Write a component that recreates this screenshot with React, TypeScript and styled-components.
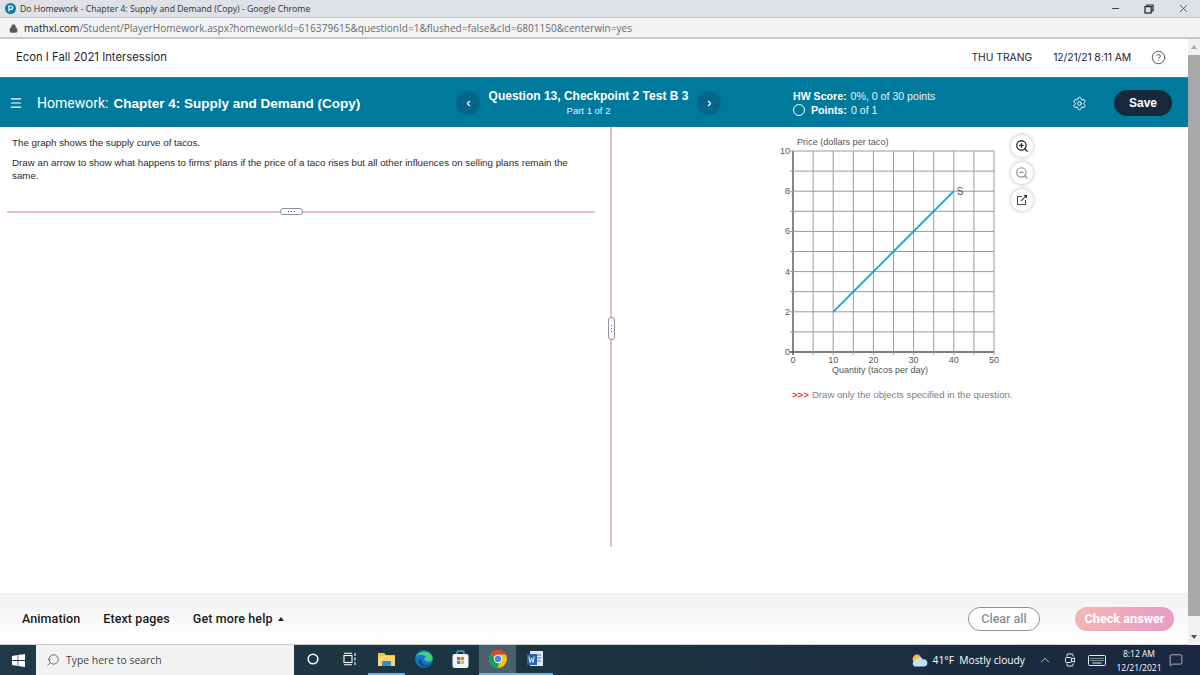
import React from "react";
import styled, { createGlobalStyle } from "styled-components";
import { Menu, Search, Settings, ZoomIn, ZoomOut, Minus, X, ChevronLeft, ChevronRight, ChevronUp, Lock, MessageSquare, HelpCircle } from "lucide-react";

const GlobalStyle = createGlobalStyle`
    html, body {
        margin: 0;
        padding: 0;
        background: #fff;
    }
    * {
        box-sizing: border-box;
    }
`;

const Screen = styled.div`
    width: 1200px;
    height: 675px;
    display: flex;
    flex-direction: column;
    overflow: hidden;
    font-family: "Liberation Sans", Arial, sans-serif;
    color: #222;
`;

const TitleBar = styled.div`
    height: 18px;
    display: flex;
    align-items: center;
    padding-left: 5px;
    background: #dee1e6;
    border-bottom: 1px solid #c4c7cc;
    font-family: "Open Sans", sans-serif;
    font-size: 8.7px;
    color: #303030;
`;

const TitleText = styled.span`
    margin-left: 4px;
    flex: 1;
`;

const WindowButton = styled.span`
    width: 34px;
    display: flex;
    justify-content: center;
    color: #333;
`;

const AddressBar = styled.div`
    height: 21px;
    display: flex;
    align-items: center;
    padding: 1px 0 0 9px;
    background: #f1f3f4;
    border-bottom: 2px solid #c9c9c9;
    font-family: "Open Sans", sans-serif;
    font-size: 10.08px;
    color: #6a6d70;
`;

const Host = styled.span`
    margin-left: 6px;
    color: #222;
`;

const Body = styled.div`
    flex: 1;
    min-height: 0;
    display: flex;
`;

const Page = styled.div`
    flex: 1;
    min-width: 0;
    display: flex;
    flex-direction: column;
`;

const ScrollBar = styled.div`
    width: 12px;
    display: flex;
    flex-direction: column;
    background: #f1f1f1;
`;

const ScrollArrow = styled.div<{ $down?: boolean }>`
    height: 16px;
    display: flex;
    align-items: center;
    justify-content: center;
    &::after {
        content: "";
        border-left: 3px solid transparent;
        border-right: 3px solid transparent;
        ${(p) => (p.$down ? "border-top: 4px solid #505050;" : "border-bottom: 4px solid #a8a8a8;")}
    }
`;

const ScrollThumb = styled.div`
    flex: 1;
    background: #a8a8a8;
`;

const ScrollRest = styled.div`
    height: 13px;
`;

const TopRow = styled.div`
    height: 38px;
    display: flex;
    align-items: center;
    padding: 0 22px 2px 16px;
    font-family: "Inter", sans-serif;
    font-size: 11.3px;
    color: #1c2733;
    background: #fff;
`;

const CourseName = styled.span`
    flex: 1;
`;

const UserName = styled.span`
    margin-right: 21px;
    font-size: 10.3px;
`;

const StampText = styled.span`
    margin-right: 20px;
    font-size: 10.4px;
    letter-spacing: -0.1px;
`;

const TealBar = styled.div`
    height: 50px;
    display: flex;
    align-items: center;
    background: #007a9c;
    border-top: 1px solid #0a93b3;
    color: #fff;
    padding: 1px 16px 0 9px;
`;

const HomeworkTitle = styled.div`
    width: 419px;
    margin-left: 14px;
    font-family: "Roboto", sans-serif;
    font-size: 14px;
    font-weight: 400;
    white-space: nowrap;
`;

const HomeworkName = styled.b`
    margin-left: 5px;
    font-family: "Liberation Sans", sans-serif;
    font-size: 13.5px;
    font-weight: 700;
`;

const NavCircle = styled.button`
    width: 24px;
    height: 24px;
    padding: 0;
    border: 0;
    border-radius: 50%;
    display: flex;
    align-items: center;
    justify-content: center;
    background: #06658a;
    color: #fff;
`;

const QuestionBlock = styled.div`
    width: 217px;
    display: flex;
    flex-direction: column;
    align-items: center;
    font-size: 12px;
    font-weight: 700;
    white-space: nowrap;
    position: relative;
    top: -1px;
`;

const QuestionPart = styled.span`
    margin-top: 2px;
    font-size: 9.5px;
    font-weight: 400;
    color: #e5f1f5;
`;

const ScoreBlock = styled.div`
    width: 279px;
    margin-left: 72px;
    display: flex;
    flex-direction: column;
    gap: 2px;
    font-size: 10.6px;
    color: #e8f3f6;
`;

const ScoreRow = styled.div`
    display: flex;
    align-items: center;
`;

const ScoreRing = styled.span`
    width: 12px;
    height: 12px;
    margin-right: 6px;
    border: 1.5px solid #fff;
    border-radius: 50%;
`;

const ScoreLabel = styled.b`
    margin-right: 4px;
    color: #fff;
`;

const SaveButton = styled.button`
    width: 58px;
    height: 26px;
    margin-left: 27px;
    border: 0;
    border-radius: 13px;
    background: #16293b;
    color: #fff;
    font-family: "Liberation Sans", sans-serif;
    font-size: 12px;
    font-weight: 700;
`;

const Main = styled.div`
    flex: 1;
    min-height: 0;
    display: flex;
    align-items: flex-start;
    background: #fff;
`;

const QuestionPane = styled.div`
    width: 612px;
    height: 420px;
    position: relative;
    border-right: 2px solid #eebccb;
    padding: 9px 0 0 12px;
    font-size: 9.75px;
    color: #2b2b2b;
`;

const Paragraph = styled.p`
    width: 562px;
    margin: 0 0 7px;
    line-height: 13px;
`;

const Separator = styled.div`
    width: 588px;
    height: 2px;
    margin: 29px 0 0 -5px;
    position: relative;
    background: #eebccb;
`;

const HSeparatorHandle = styled.span`
    position: absolute;
    left: 273px;
    top: -3px;
    width: 23px;
    height: 7px;
    border: 1px solid #8c93a0;
    border-radius: 3px;
    background: #fff;
    display: flex;
    align-items: center;
    justify-content: center;
    gap: 1.5px;
`;

const VSeparatorHandle = styled.span`
    position: absolute;
    right: -5px;
    top: 190px;
    width: 7px;
    height: 23px;
    border: 1px solid #8c93a0;
    border-radius: 3px;
    background: #fff;
    display: flex;
    flex-direction: column;
    align-items: center;
    justify-content: center;
    gap: 1.5px;
`;

const HandleDot = styled.i`
    width: 1.5px;
    height: 1.5px;
    background: #555;
`;

const GraphPane = styled.div`
    padding: 5px 0 0 158px;
`;

const GraphRow = styled.div`
    display: flex;
    align-items: flex-start;
`;

const GraphSvg = styled.svg`
    display: block;
    font-family: "Liberation Sans", sans-serif;
    fill: #555;
`;

const ToolColumn = styled.div`
    margin: 3px 0 0 1px;
    display: flex;
    flex-direction: column;
    gap: 5px;
`;

const ToolButton = styled.button<{ $muted?: boolean }>`
    width: 22px;
    height: 22px;
    padding: 0;
    border: 0;
    border-radius: 50%;
    display: flex;
    align-items: center;
    justify-content: center;
    background: #fff;
    box-shadow: 0 0 4px rgba(0, 0, 0, 0.3);
    color: ${(p) => (p.$muted ? "#8b929a" : "#1c2733")};
`;

const GraphNote = styled.div`
    margin: 9px 0 0 22px;
    font-size: 9.65px;
    color: #7b7f85;
`;

const NoteMark = styled.b`
    margin-right: 3px;
    color: #ef3a3a;
`;

const Footer = styled.div`
    height: 52px;
    display: flex;
    align-items: center;
    padding: 0 14px 0 22px;
    background: linear-gradient(#f2f2f2, #ffffff);
    border-bottom: 1px solid #d0d0d0;
    font-family: "Roboto", sans-serif;
    font-size: 12.5px;
    font-weight: 500;
    color: #1b1b1b;
`;

const FooterLink = styled.span`
    margin-right: 23px;
    letter-spacing: 0.1px;
`;

const Caret = styled.i`
    display: inline-block;
    margin-left: 5px;
    vertical-align: 2px;
    border-left: 3px solid transparent;
    border-right: 3px solid transparent;
    border-bottom: 4px solid #222;
`;

const FooterSpace = styled.div`
    flex: 1;
`;

const ClearButton = styled.button`
    width: 72px;
    height: 24px;
    border: 1.5px solid #8a929f;
    border-radius: 12px;
    background: #fff;
    color: #87909c;
    font-family: "Roboto", sans-serif;
    font-size: 12.5px;
    font-weight: 500;
`;

const CheckButton = styled.button`
    width: 99px;
    height: 24px;
    margin-left: 35px;
    border: 0;
    border-radius: 12px;
    background: linear-gradient(90deg, #f5b5b2, #e79ccb);
    color: #fff;
    font-family: "Roboto", sans-serif;
    font-size: 12.7px;
    font-weight: 700;
    white-space: nowrap;
    padding: 0;
`;

const Taskbar = styled.div`
    height: 30px;
    display: flex;
    align-items: center;
    background: linear-gradient(90deg, #1f3a46, #1c3340 50%, #1a2740);
    color: #fff;
    font-family: "Open Sans", sans-serif;
    font-size: 11px;
`;

const StartSlot = styled.div`
    width: 36px;
    display: flex;
    justify-content: center;
`;

const SearchBox = styled.div`
    width: 258px;
    height: 30px;
    padding-left: 10px;
    display: flex;
    align-items: center;
    gap: 6px;
    background: #f2f2f2;
    color: #444;
    font-size: 10.4px;
`;

const FlippedSearch = styled(Search)`
    transform: scaleX(-1);
`;

const TaskIcon = styled.div<{ $active?: boolean; $open?: boolean }>`
    width: 37px;
    height: 30px;
    display: flex;
    align-items: center;
    justify-content: center;
    background: ${(p) => (p.$active ? "#48606b" : "transparent")};
    border-bottom: 2px solid ${(p) => (p.$open ? "#6cb4ea" : "transparent")};
`;

const TaskSpace = styled.div`
    flex: 1;
`;

const WeatherText = styled.span`
    margin: 0 13px 0 5px;
    font-size: 10.25px;
    white-space: nowrap;
`;

const TrayIcon = styled.span`
    margin-right: 13px;
    display: flex;
    align-items: center;
`;

const NotifyIcon = styled(TrayIcon)`
    margin-right: 17px;
`;

const Clock = styled.div`
    width: 40px;
    margin-right: 10px;
    display: flex;
    flex-direction: column;
    align-items: center;
    gap: 3px;
    font-size: 8.5px;
    line-height: 11px;
    white-space: nowrap;
`;

const xTicks = [0, 1, 2, 3, 4, 5, 6, 7, 8, 9, 10];
const X0 = 23;
const Y0 = 220;
const STEP = 20.1;

function PriceGraph() {
    return (
        <GraphSvg width={240} height={248} viewBox="0 0 240 248">
            <text x={27} y={13} fontSize={9.1}>Price (dollars per taco)</text>
            {xTicks.map((i) => (
                <g key={i}>
                    <line x1={X0 + i * STEP} y1={Y0 - 10 * STEP} x2={X0 + i * STEP} y2={Y0 + 3} stroke={i === 0 ? "#555" : "#9a9a9a"} strokeWidth={i === 0 ? 1.4 : 1} />
                    <line x1={X0 - 3} y1={Y0 - i * STEP} x2={X0 + 10 * STEP} y2={Y0 - i * STEP} stroke={i === 0 ? "#555" : "#9a9a9a"} strokeWidth={i === 0 ? 1.4 : 1} />
                </g>
            ))}
            {[0, 2, 4, 6, 8, 10].map((n) => (
                <text key={n} x={X0 - 3} y={Y0 - n * STEP + 3} fontSize={9} textAnchor="end">{n}</text>
            ))}
            {[0, 10, 20, 30, 40, 50].map((n) => (
                <text key={n} x={X0 + (n / 5) * STEP} y={Y0 + 11} fontSize={9} textAnchor="middle">{n}</text>
            ))}
            <line x1={X0 + 2 * STEP} y1={Y0 - 2 * STEP} x2={X0 + 8 * STEP} y2={Y0 - 8 * STEP} stroke="#04a6e8" strokeWidth={1.8} />
            <text x={X0 + 8 * STEP + 3} y={Y0 - 8 * STEP + 4} fontSize={10}>S</text>
            <text x={X0 + 87} y={Y0 + 20.5} fontSize={9} textAnchor="middle">Quantity (tacos per day)</text>
        </GraphSvg>
    );
}

function PearsonLogo() {
    return (
        <svg width={11} height={11} viewBox="0 0 11 11">
            <circle cx={5.5} cy={5.5} r={5.5} fill="#0d7ea6" />
            <path d="M4 8.5V3h2a1.6 1.6 0 010 3.4H4" fill="none" stroke="#fff" strokeWidth={1.2} />
        </svg>
    );
}

function RestoreIcon() {
    return (
        <svg width={10} height={10} viewBox="0 0 10 10" fill="none" stroke="#222" strokeWidth={1.2}>
            <rect x={1} y={2.6} width={6.2} height={6.4} />
            <path d="M3 2.5V1h6v6H7.4" />
        </svg>
    );
}

function ExternalIcon() {
    return (
        <svg width={12} height={12} viewBox="0 0 12 12" fill="none" stroke="#4a5058" strokeWidth={1.1}>
            <path d="M6 2.5H1.5v8h8V6" />
            <path d="M5 7l5-5" />
            <path d="M7.5 1h3.5v3.5z" fill="#1c2733" stroke="none" />
        </svg>
    );
}

function WindowsLogo() {
    return (
        <svg width={13} height={13} viewBox="0 0 13 13" fill="#fff">
            <path d="M0 1.9l5.6-.8v5H0zM6.3 1l6.7-1v6.1H6.3zM0 6.9h5.6v5L0 11.1zM6.3 6.9H13V13l-6.7-1z" />
        </svg>
    );
}

function CortanaIcon() {
    return (
        <svg width={12} height={12} viewBox="0 0 12 12">
            <circle cx={6} cy={6} r={4.8} fill="none" stroke="#fff" strokeWidth={1.6} />
        </svg>
    );
}

function TaskViewIcon() {
    return (
        <svg width={13} height={14} viewBox="0 0 13 14" fill="none" stroke="#fff" strokeWidth={1.1}>
            <rect x={1} y={3.5} width={8} height={7} />
            <path d="M1 1.2h8M1 12.8h8M12 1v3M12 5.5v3M12 10v3" />
        </svg>
    );
}

function FolderIcon() {
    return (
        <svg width={17} height={15} viewBox="0 0 17 15">
            <path d="M0 1h6l2 2h9v11H0z" fill="#f2c43d" />
            <rect x={0} y={4} width={17} height={10} fill="#fbd667" />
            <rect x={4} y={9} width={9} height={5} fill="#2f8fd6" />
        </svg>
    );
}

function EdgeIcon() {
    return (
        <svg width={18} height={18} viewBox="0 0 18 18">
            <circle cx={9} cy={9} r={9} fill="#1174c4" />
            <path d="M1 7C3 1 15-1 17.6 8c.4 3-3 4-6 3.4C9 11 8.4 8 11 7 8 4 3 4 1 7z" fill="#45cf7e" />
            <path d="M6 9c0 4 4 7 9 5.4-3 3.4-9 3-11-1-1-2 0-4 2-4.4z" fill="#0a4f96" />
        </svg>
    );
}

function StoreIcon() {
    return (
        <svg width={17} height={18} viewBox="0 0 17 18">
            <path d="M5 4V2.4A1.5 1.5 0 016.5 1h4A1.5 1.5 0 0112 2.4V4" fill="none" stroke="#3aa7e0" strokeWidth={1.4} />
            <rect x={0.5} y={4} width={16} height={14} rx={2} fill="#f4f4f4" />
            <rect x={5} y={7} width={3.2} height={3.2} fill="#f25022" />
            <rect x={8.8} y={7} width={3.2} height={3.2} fill="#7fba00" />
            <rect x={5} y={10.8} width={3.2} height={3.2} fill="#00a4ef" />
            <rect x={8.8} y={10.8} width={3.2} height={3.2} fill="#ffb900" />
        </svg>
    );
}

function ChromeIcon() {
    return (
        <svg width={18} height={18} viewBox="0 0 18 18">
            <circle cx={9} cy={9} r={9} fill="#f4c20d" />
            <path d="M9 0a9 9 0 017.8 4.5H9A4.5 4.5 0 004.8 7.3L2.2 3.2A9 9 0 019 0z" fill="#db4437" />
            <path d="M2.2 3.2l4 7a4.5 4.5 0 004.4 2.6L8 18A9 9 0 012.2 3.2z" fill="#0f9d58" />
            <circle cx={9} cy={9} r={4.2} fill="#fff" />
            <circle cx={9} cy={9} r={3.2} fill="#4285f4" />
        </svg>
    );
}

function WordIcon() {
    return (
        <svg width={18} height={18} viewBox="0 0 18 18">
            <rect x={4} y={1} width={13} height={15} fill="#dfe7f3" />
            <path d="M8 5h7M8 8h7M8 11h7" stroke="#4a75b8" />
            <rect x={1} y={4} width={10} height={11} fill="#2b5fa8" />
            <path d="M2.8 6.5l1.3 6 1.4-4.5L7 12.5l1.2-6" fill="none" stroke="#fff" strokeWidth={0.9} />
        </svg>
    );
}

function WeatherIcon() {
    return (
        <svg width={16} height={13} viewBox="0 0 16 13">
            <circle cx={5} cy={5} r={4.4} fill="#f5c04a" />
            <path d="M4 12.5a3 3 0 01-.4-6A4 4 0 0111 5.4a3.6 3.6 0 011.4 7.1z" fill="#bfe0f7" />
        </svg>
    );
}

function MeetIcon() {
    return (
        <svg width={10} height={14} viewBox="0 0 10 14" fill="none" stroke="#fff" strokeWidth={0.9}>
            <path d="M2 3.5V2a1 1 0 011-1h4a1 1 0 011 1v1.5M2 10.5V12a1 1 0 001 1h4a1 1 0 001-1v-1.5" />
            <rect x={0.5} y={4.5} width={6} height={5} rx={1} />
            <path d="M6.5 6l3-1.2v4.4l-3-1.2" />
        </svg>
    );
}

function KeyboardIcon() {
    return (
        <svg width={18} height={11} viewBox="0 0 18 11" fill="none" stroke="#fff" strokeWidth={0.9}>
            <rect x={0.5} y={0.5} width={17} height={10} rx={1} />
            <path d="M2.5 3.5h13M2.5 5.5h13" strokeDasharray="1 1" />
            <path d="M4.5 8h9" />
        </svg>
    );
}

export default function App() {
    return (
        <>
            <GlobalStyle />
            <Screen>
                <TitleBar>
                    <PearsonLogo />
                    <TitleText>Do Homework - Chapter 4: Supply and Demand (Copy) - Google Chrome</TitleText>
                    <WindowButton><Minus size={11} /></WindowButton>
                    <WindowButton><RestoreIcon /></WindowButton>
                    <WindowButton><X size={13} strokeWidth={1.3} /></WindowButton>
                </TitleBar>
                <AddressBar>
                    <Lock size={9} fill="#555" stroke="#555" />
                    <Host>mathxl.com</Host>
                    /Student/PlayerHomework.aspx?homeworkId=616379615&questionId=1&flushed=false&cId=6801150&centerwin=yes
                </AddressBar>
                <Body>
                    <Page>
                        <TopRow>
                            <CourseName>Econ I Fall 2021 Intersession</CourseName>
                            <UserName>THU TRANG</UserName>
                            <StampText>12/21/21 8:11 AM</StampText>
                            <HelpCircle size={15} strokeWidth={1.2} />
                        </TopRow>
                        <TealBar>
                            <Menu size={14} strokeWidth={2} />
                            <HomeworkTitle>Homework:<HomeworkName>Chapter 4: Supply and Demand (Copy)</HomeworkName></HomeworkTitle>
                            <NavCircle><ChevronLeft size={9} strokeWidth={3} /></NavCircle>
                            <QuestionBlock>
                                Question 13, Checkpoint 2 Test B 3
                                <QuestionPart>Part 1 of 2</QuestionPart>
                            </QuestionBlock>
                            <NavCircle><ChevronRight size={9} strokeWidth={3} /></NavCircle>
                            <ScoreBlock>
                                <ScoreRow><ScoreLabel>HW Score:</ScoreLabel>0%, 0 of 30 points</ScoreRow>
                                <ScoreRow><ScoreRing /><ScoreLabel>Points:</ScoreLabel>0 of 1</ScoreRow>
                            </ScoreBlock>
                            <Settings size={15} strokeWidth={1.5} />
                            <SaveButton>Save</SaveButton>
                        </TealBar>
                        <Main>
                            <QuestionPane>
                                <Paragraph>The graph shows the supply curve of tacos.</Paragraph>
                                <Paragraph>Draw an arrow to show what happens to firms' plans if the price of a taco rises but all other influences on selling plans remain the same.</Paragraph>
                                <Separator>
                                    <HSeparatorHandle><HandleDot /><HandleDot /><HandleDot /></HSeparatorHandle>
                                </Separator>
                                <VSeparatorHandle><HandleDot /><HandleDot /><HandleDot /></VSeparatorHandle>
                            </QuestionPane>
                            <GraphPane>
                                <GraphRow>
                                    <PriceGraph />
                                    <ToolColumn>
                                        <ToolButton><ZoomIn size={14} strokeWidth={2.2} /></ToolButton>
                                        <ToolButton $muted><ZoomOut size={14} /></ToolButton>
                                        <ToolButton><ExternalIcon /></ToolButton>
                                    </ToolColumn>
                                </GraphRow>
                                <GraphNote><NoteMark>&gt;&gt;&gt;</NoteMark>Draw only the objects specified in the question.</GraphNote>
                            </GraphPane>
                        </Main>
                        <Footer>
                            <FooterLink>Animation</FooterLink>
                            <FooterLink>Etext pages</FooterLink>
                            <FooterLink>Get more help<Caret /></FooterLink>
                            <FooterSpace />
                            <ClearButton>Clear all</ClearButton>
                            <CheckButton>Check answer</CheckButton>
                        </Footer>
                    </Page>
                    <ScrollBar>
                        <ScrollArrow />
                        <ScrollThumb />
                        <ScrollRest />
                        <ScrollArrow $down />
                    </ScrollBar>
                </Body>
                <Taskbar>
                    <StartSlot><WindowsLogo /></StartSlot>
                    <SearchBox><FlippedSearch size={14} strokeWidth={1.3} />Type here to search</SearchBox>
                    <TaskIcon><CortanaIcon /></TaskIcon>
                    <TaskIcon><TaskViewIcon /></TaskIcon>
                    <TaskIcon $open><FolderIcon /></TaskIcon>
                    <TaskIcon><EdgeIcon /></TaskIcon>
                    <TaskIcon><StoreIcon /></TaskIcon>
                    <TaskIcon $active $open><ChromeIcon /></TaskIcon>
                    <TaskIcon $open><WordIcon /></TaskIcon>
                    <TaskSpace />
                    <WeatherIcon />
                    <WeatherText>41°F&nbsp; Mostly cloudy</WeatherText>
                    <TrayIcon><ChevronUp size={14} strokeWidth={1.2} /></TrayIcon>
                    <TrayIcon><MeetIcon /></TrayIcon>
                    <TrayIcon><KeyboardIcon /></TrayIcon>
                    <Clock><span>8:12 AM</span><span>12/21/2021</span></Clock>
                    <NotifyIcon><MessageSquare size={14} strokeWidth={1.1} /></NotifyIcon>
                </Taskbar>
            </Screen>
        </>
    );
}
